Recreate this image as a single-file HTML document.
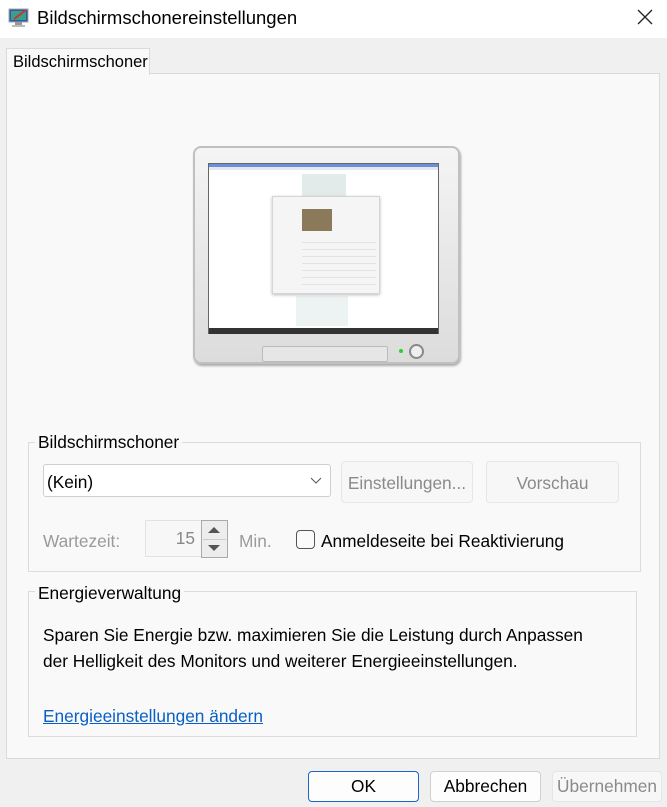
<!DOCTYPE html>
<html><head><meta charset="utf-8"><style>
*{margin:0;padding:0;box-sizing:border-box}
body{width:667px;height:807px;background:#f0f0f0;font-family:"Liberation Sans",sans-serif;font-size:17.3px;color:#000;position:relative;overflow:hidden}
.a{position:absolute}
.title{left:0;top:0;width:667px;height:38px;background:#fff}
.btn{position:absolute;border:1px solid #d0d0d0;border-radius:4px;background:#fdfdfd;text-align:center;line-height:28px}
.dis{color:#8a8a8a;background:#f7f7f7;border-color:#e6e6e6}
</style></head><body>
<div class="a title">
  <svg class="a" style="left:8px;top:6px" width="22" height="22" viewBox="0 0 22 22">
    <rect x="1" y="3" width="19" height="13" fill="#2a5aa8" stroke="#aaa"/>
    <rect x="3" y="5" width="15" height="9" fill="#3aa08a"/>
    <path d="M6 13 L18 4" stroke="#c33" stroke-width="2"/>
    <rect x="7" y="16" width="7" height="3" fill="#999"/><rect x="4" y="19" width="13" height="2" fill="#bbb"/>
  </svg>
  <div class="a" style="left:37px;top:7px;font-size:18.5px">Bildschirmschonereinstellungen</div>
  <svg class="a" style="left:636px;top:8px" width="18" height="18" viewBox="0 0 18 18"><path d="M2 2L16 16M16 2L2 16" stroke="#222" stroke-width="1.3"/></svg>
</div>
<div class="a" style="left:6px;top:73px;width:654px;height:686px;background:#f9f9f9;border:1px solid #dadada"></div>
<div class="a" style="left:6px;top:48px;width:144px;height:27px;background:#f9f9f9;border:1px solid #dadada;border-bottom:none;padding:4px 0 0 6px;font-size:16.5px;white-space:nowrap">Bildschirmschoner</div>

<!-- monitor -->
<div class="a" style="left:193px;top:146px;width:267px;height:218px;border-radius:8px;background:linear-gradient(#f4f4f4,#dcdcdc);border:2px solid #c0c0c0;box-shadow:1px 2px 2px #aaa"></div>
<div class="a" style="left:208px;top:163px;width:231px;height:171px;background:#fff;border:1px solid #666"></div>
<div class="a" style="left:209px;top:164px;width:229px;height:3px;background:#6b8fd8"></div>
<div class="a" style="left:209px;top:167px;width:229px;height:3px;background:#e4e8ee"></div>
<div class="a" style="left:302px;top:174px;width:44px;height:22px;background:#e3eaea"></div>
<div class="a" style="left:296px;top:296px;width:52px;height:30px;background:#edf2f3"></div>
<div class="a" style="left:272px;top:196px;width:108px;height:98px;background:#f5f5f5;border:1px solid #d5d5d5;box-shadow:0 1px 3px #bbb"></div>
<div class="a" style="left:302px;top:209px;width:30px;height:22px;background:#8a7a5a"></div>
<div class="a" style="left:302px;top:236px;width:74px;height:50px;background:repeating-linear-gradient(#f5f5f5 0 6px,#e2e2e2 6px 7px)"></div>
<div class="a" style="left:209px;top:328px;width:229px;height:6px;background:#333"></div>
<div class="a" style="left:262px;top:346px;width:126px;height:16px;border:1px solid #bbb;border-radius:2px;background:#e6e6e6"></div>
<div class="a" style="left:399px;top:349px;width:4px;height:4px;background:#3c3;border-radius:2px"></div>
<div class="a" style="left:409px;top:344px;width:15px;height:15px;border:2px solid #888;border-radius:50%;background:#eee"></div>

<!-- group 1 -->
<div class="a" style="left:28px;top:442px;width:613px;height:130px;border:1px solid #dcdcdc"></div>
<div class="a" style="left:35px;top:432px;background:#f9f9f9;padding:0 3px">Bildschirmschoner</div>
<div class="a" style="left:43px;top:464px;width:288px;height:33px;background:#fff;border:1px solid #cfcfcf;border-radius:3px;padding:7px 0 0 3px">(Kein)</div>
<svg class="a" style="left:310px;top:477px" width="12" height="8" viewBox="0 0 12 8"><path d="M1 1L6 6L11 1" stroke="#555" fill="none"/></svg>
<div class="btn dis" style="left:341px;top:461px;width:132px;height:42px;line-height:42px">Einstellungen...</div>
<div class="btn dis" style="left:486px;top:461px;width:133px;height:42px;line-height:42px">Vorschau</div>
<div class="a" style="left:43px;top:531px;color:#9a9a9a">Wartezeit:</div>
<div class="a" style="left:145px;top:520px;width:57px;height:37px;border:1px solid #e2e2e2;background:#f7f7f7;color:#888;text-align:right;padding:7px 6px 0 0">15</div>
<div class="a" style="left:201px;top:520px;width:27px;height:38px;border:1px solid #aaa;background:#ededed"></div>
<div class="a" style="left:203px;top:539px;width:23px;height:1px;background:#ccc"></div>
<svg class="a" style="left:208px;top:527px" width="12" height="6"><path d="M0 6L6 0L12 6Z" fill="#555"/></svg>
<svg class="a" style="left:208px;top:545px" width="12" height="6"><path d="M0 0L6 6L12 0Z" fill="#555"/></svg>
<div class="a" style="left:239px;top:531px;color:#9a9a9a">Min.</div>
<div class="a" style="left:296px;top:530px;width:19px;height:19px;border:1px solid #555;border-radius:4px;background:#fafafa"></div>
<div class="a" style="left:321px;top:531px">Anmeldeseite bei Reaktivierung</div>

<!-- group 2 -->
<div class="a" style="left:28px;top:591px;width:609px;height:146px;border:1px solid #dcdcdc"></div>
<div class="a" style="left:35px;top:583px;background:#f9f9f9;padding:0 3px">Energieverwaltung</div>
<div class="a" style="left:43px;top:622px;line-height:26px">Sparen Sie Energie bzw. maximieren Sie die Leistung durch Anpassen<br>der Helligkeit des Monitors und weiterer Energieeinstellungen.</div>
<div class="a" style="left:43px;top:706px;color:#0a5fc4;text-decoration:underline">Energieeinstellungen ändern</div>

<div class="btn" style="left:308px;top:771px;width:111px;height:31px;border-color:#1a66c9">OK</div>
<div class="btn" style="left:430px;top:771px;width:111px;height:31px">Abbrechen</div>
<div class="btn dis" style="left:552px;top:771px;width:110px;height:31px">Übernehmen</div>
</body></html>
